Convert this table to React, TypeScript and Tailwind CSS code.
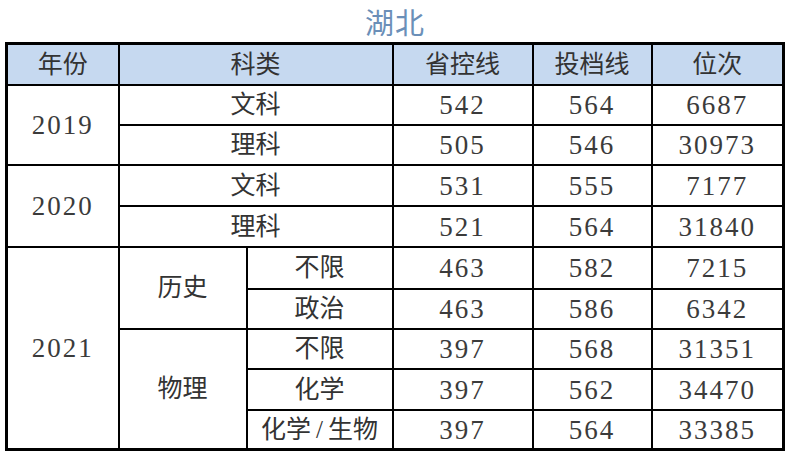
import React from 'react'

const font = { fontFamily: '"Liberation Serif", "Noto Sans CJK SC", serif' }

const cell = 'border-2 border-black text-center align-middle text-[25px] leading-none text-[#333] p-0'
const num = 'border-2 border-black text-center align-middle text-[27px] leading-none tracking-[2px] text-[#3b3b3b] p-0 pt-[2px]'

type Row = { a: string; b: string; c: string }

function Nums({ a, b, c }: Row) {
  return (
    <>
      <td className={num}>{a}</td>
      <td className={num}>{b}</td>
      <td className={num}>{c}</td>
    </>
  )
}

export default function App() {
  return (
    <div className="w-[788px] h-[454px] bg-white overflow-hidden" style={font}>
      <div className="h-[42px] flex items-center justify-center pl-[2px]">
        <span className="text-[29px] leading-none text-[#6b8fb8] font-['Noto_Sans_CJK_SC'] tracking-[1px]">湖北</span>
      </div>
      <table className="ml-[5px] w-[777px] table-fixed border-collapse border-[3px] border-black">
        <colgroup>
          <col className="w-[112px]" />
          <col className="w-[128px]" />
          <col className="w-[146px]" />
          <col className="w-[140px]" />
          <col className="w-[119px]" />
          <col className="w-[132px]" />
        </colgroup>
        <tbody>
          <tr className="h-[41px] bg-[#c6d9f0]">
            <td className={cell}>年份</td>
            <td className={cell} colSpan={2}>科类</td>
            <td className={cell}>省控线</td>
            <td className={cell}>投档线</td>
            <td className={cell}>位次</td>
          </tr>
          <tr className="h-[40px]">
            <td className={num} rowSpan={2}>2019</td>
            <td className={cell} colSpan={2}>文科</td>
            <Nums a="542" b="564" c="6687" />
          </tr>
          <tr className="h-[40px]">
            <td className={cell} colSpan={2}>理科</td>
            <Nums a="505" b="546" c="30973" />
          </tr>
          <tr className="h-[41px]">
            <td className={num} rowSpan={2}>2020</td>
            <td className={cell} colSpan={2}>文科</td>
            <Nums a="531" b="555" c="7177" />
          </tr>
          <tr className="h-[41px]">
            <td className={cell} colSpan={2}>理科</td>
            <Nums a="521" b="564" c="31840" />
          </tr>
          <tr className="h-[42px]">
            <td className={num} rowSpan={5}>2021</td>
            <td className={cell} rowSpan={2}>历史</td>
            <td className={cell}>不限</td>
            <Nums a="463" b="582" c="7215" />
          </tr>
          <tr className="h-[40px]">
            <td className={cell}>政治</td>
            <Nums a="463" b="586" c="6342" />
          </tr>
          <tr className="h-[40px]">
            <td className={cell} rowSpan={3}>物理</td>
            <td className={cell}>不限</td>
            <Nums a="397" b="568" c="31351" />
          </tr>
          <tr className="h-[41px]">
            <td className={cell}>化学</td>
            <Nums a="397" b="562" c="34470" />
          </tr>
          <tr className="h-[40px]">
            <td className={cell}>
              化学<span className="mx-[5px]">/</span>生物
            </td>
            <Nums a="397" b="564" c="33385" />
          </tr>
        </tbody>
      </table>
    </div>
  )
}
